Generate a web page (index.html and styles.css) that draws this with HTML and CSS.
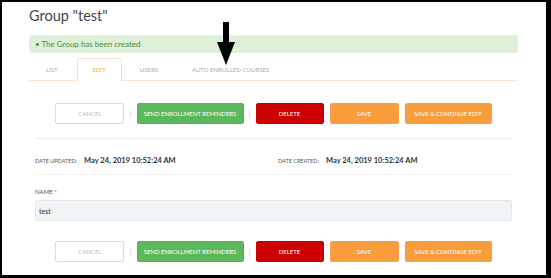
FILE: index.html
```html
<!DOCTYPE html>
<html lang="en">
<head>
    <meta charset="UTF-8">
    <title>Group "test"</title>
    <link rel="stylesheet" href="styles.css">
</head>
<body>
    <div class="page">
        <div class="content">
            <h1 class="title">Group "test"</h1>

            <div class="alert">&bull; The Group has been created</div>

            <ul class="tabs">
                <li class="tab">LIST</li>
                <li class="tab active">EDIT</li>
                <li class="tab">USERS</li>
                <li class="tab">AUTO ENROLLED COURSES</li>
            </ul>

            <div class="actions">
                <button class="btn btn-cancel w-cancel">CANCEL</button>
                <span class="sep">|</span>
                <button class="btn btn-green w-send">SEND ENROLLMENT REMINDERS</button>
                <span class="sep">|</span>
                <button class="btn btn-red w-delete">DELETE</button>
                <button class="btn btn-orange w-save">SAVE</button>
                <button class="btn btn-orange w-continue">SAVE &amp; CONTINUE EDIT</button>
            </div>

            <div class="details">
                <div class="dates">
                    <div class="date-item">
                        <span class="date-label">DATE UPDATED:</span>
                        <span class="date-value">May 24, 2019 10:52:24 AM</span>
                    </div>
                    <div class="date-item">
                        <span class="date-label">DATE CREATED:</span>
                        <span class="date-value">May 24, 2019 10:52:24 AM</span>
                    </div>
                </div>

                <div class="field">
                    <label class="field-label" for="name">NAME *</label>
                    <input class="field-input" type="text" id="name" value="test">
                </div>
            </div>

            <div class="actions actions-bottom">
                <button class="btn btn-cancel w-cancel">CANCEL</button>
                <span class="sep">|</span>
                <button class="btn btn-green w-send">SEND ENROLLMENT REMINDERS</button>
                <span class="sep">|</span>
                <button class="btn btn-red w-delete">DELETE</button>
                <button class="btn btn-orange w-save">SAVE</button>
                <button class="btn btn-orange w-continue">SAVE &amp; CONTINUE EDIT</button>
            </div>
        </div>

        <!-- pointer arrow drawn over the tabs -->
        <svg class="pointer" width="20" height="44" viewBox="0 0 20 44">
            <rect x="6" y="0" width="6" height="21" fill="#000"/>
            <polygon points="0,20 18,20 9,43" fill="#000"/>
        </svg>
    </div>
</body>
</html>
```

FILE: styles.css
```css
html, body {
    margin: 0;
    padding: 0;
}
body {
    background-color: #000;
    font-family: Lato, "Open Sans", sans-serif;
    color: #333;
}
.page {
    position: relative;
    background-color: #fff;
    margin: 2px 5px 0 2px;
    width: 544px;
    height: 273px;
    overflow: hidden;
}
.content {
    margin-left: 27px;
    width: 489px;
    padding-top: 4px;
}
.title {
    margin: 0;
    font-size: 14.5px;
    font-weight: 400;
    line-height: 20px;
    color: #444;
}
.alert {
    margin-top: 9px;
    height: 18px;
    line-height: 18px;
    padding: 0 6px;
    background-color: #dff0d8;
    border-radius: 3px;
    color: #4a8a3a;
    font-size: 8px;
}
.tabs {
    list-style: none;
    margin: 5px 0 0;
    padding: 0;
    display: flex;
    border-bottom: 1px solid #fde7cc;
}
.tab {
    height: 21px;
    line-height: 21px;
    padding: 0 15px;
    margin-right: 2px;
    font-size: 6px;
    color: #aaa;
    border: 1px solid transparent;
    border-bottom: none;
    border-radius: 2px 2px 0 0;
}
.tab:first-child {
    padding: 0 16px;
}
.tab.active {
    color: #f7a248;
    border-color: #fde2c2;
    background-color: #fff;
    margin-bottom: -1px;
    height: 22px;
}
.actions {
    display: flex;
    justify-content: center;
    align-items: center;
    margin-top: 22px;
    gap: 6px;
}
.actions-bottom {
    margin-top: 20px;
}
.btn {
    height: 21px;
    border-radius: 2px;
    border: 1px solid transparent;
    font-family: inherit;
    font-size: 6px;
    color: #fff;
    padding: 0;
}
.sep {
    color: #ccc;
    font-size: 8px;
    margin: 0 -1px;
}
.w-cancel { width: 69px; }
.w-send { width: 107px; }
.w-delete { width: 68px; }
.w-save { width: 69px; }
.w-continue { width: 87px; }
.btn-cancel {
    background-color: #fff;
    border-color: #fbd3a8;
    color: #bbb;
}
.btn-green {
    background-color: #5cb85c;
    border-color: #55b255;
}
.btn-red {
    background-color: #cc0000;
    border-color: #c20000;
}
.btn-orange {
    background-color: #f89c3c;
    border-color: #f5a04c;
}
.details {
    margin: 14px 6px 0;
}
.dates {
    display: grid;
    grid-template-columns: 243px 1fr;
    border-top: 1px solid #ececec;
    border-bottom: 1px solid #f2f2f2;
    height: 35px;
    align-items: center;
}
.date-label {
    font-size: 5.5px;
    color: #555;
    margin-right: 3px;
}
.date-value {
    font-size: 7.5px;
    font-weight: 700;
    color: #333;
}
.field {
    margin-top: 13px;
}
.field-label {
    display: block;
    font-size: 6px;
    color: #555;
    line-height: 8px;
}
.field-input {
    display: block;
    box-sizing: border-box;
    width: 100%;
    height: 21px;
    margin-top: 4px;
    padding: 0 3px;
    background-color: #f1f4f7;
    border: 1px solid #e3e7ea;
    border-radius: 2px;
    font-family: inherit;
    font-size: 7px;
    color: #333;
}
.pointer {
    position: absolute;
    left: 215px;
    top: 20px;
}
```
